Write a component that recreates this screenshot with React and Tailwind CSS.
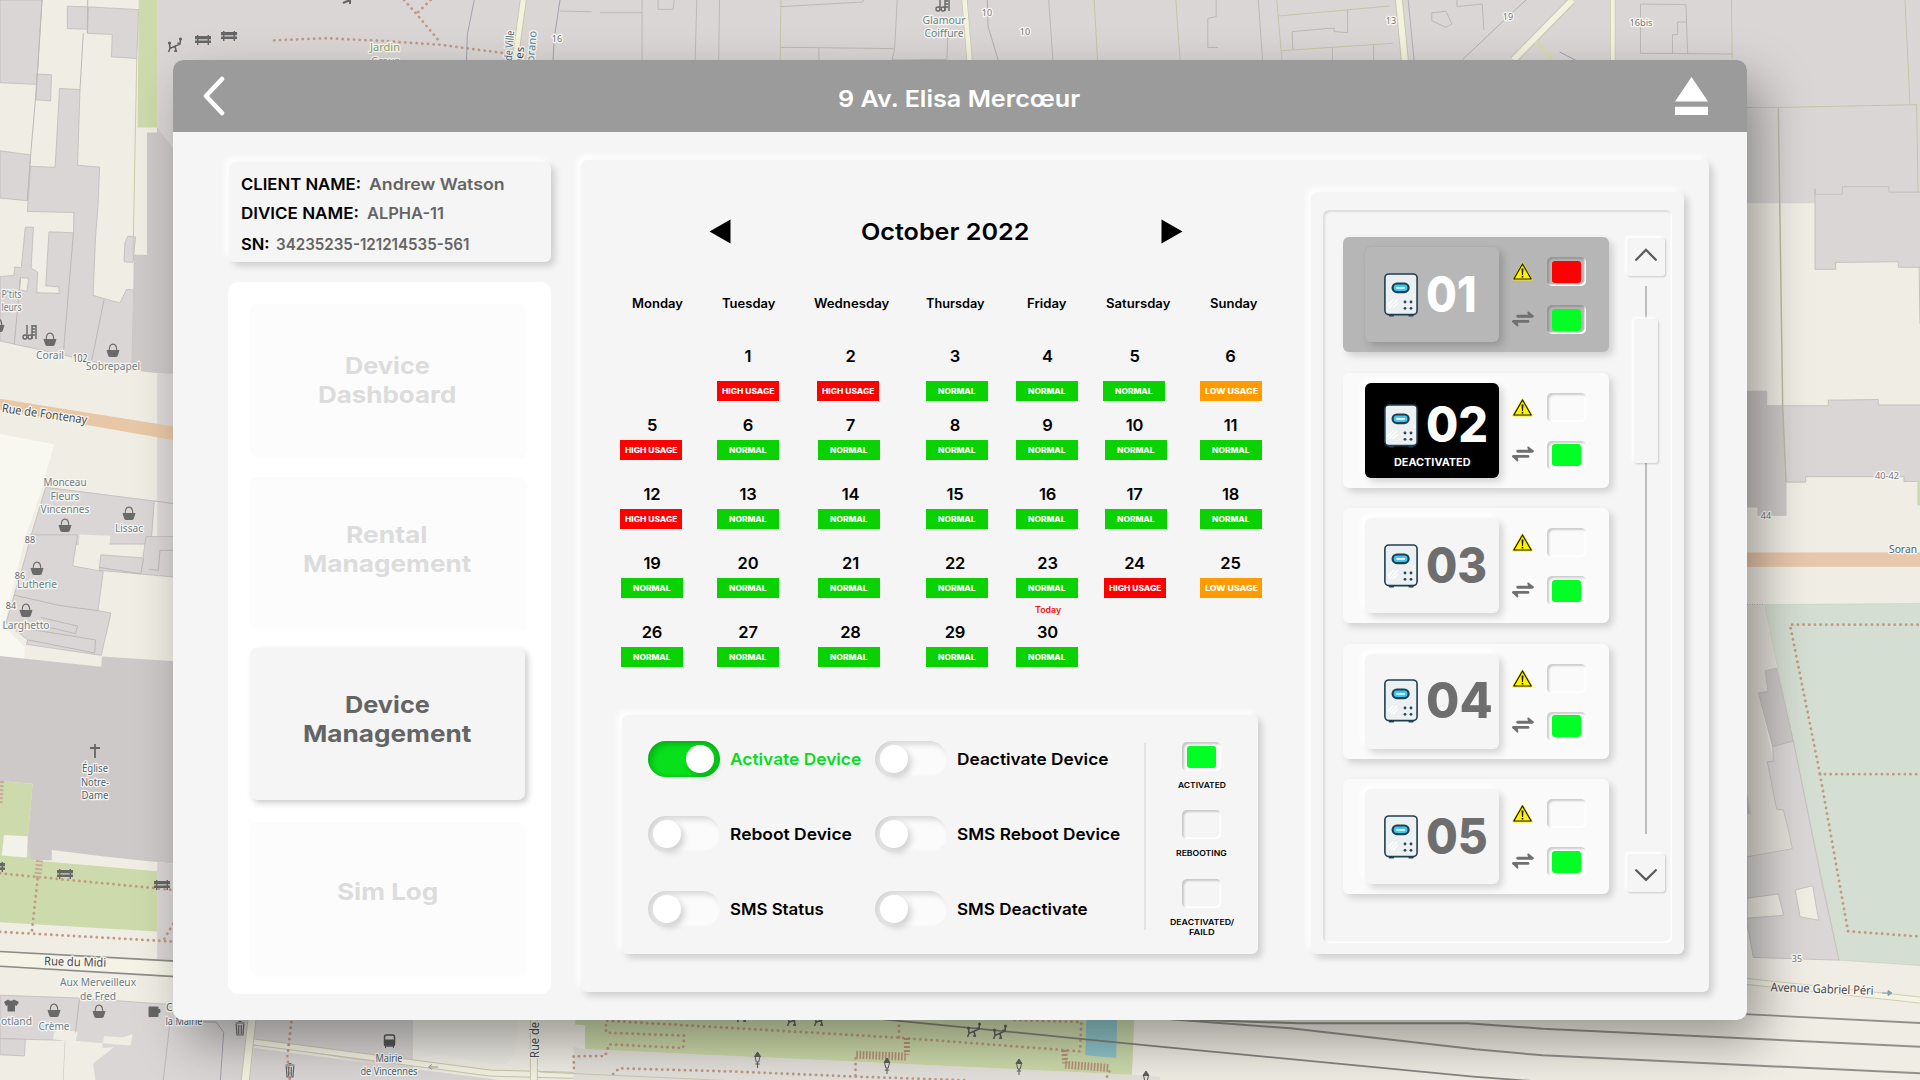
import { useLayoutEffect, useRef, useState } from "react";

/* Text on one line, widened or narrowed to an exact width. */
function Fit({ w, className = "", children }) {
  const ref = useRef(null);
  const [scale, setScale] = useState(1);
  useLayoutEffect(() => {
    const natural = ref.current.offsetWidth;
    if (natural) setScale(w / natural);
  }, [w]);
  return (
    <span className={"inline-block whitespace-nowrap text-left " + className} style={{ width: w }}>
      <span ref={ref} className="inline-block origin-left" style={{ transform: `scaleX(${scale})` }}>
        {children}
      </span>
    </span>
  );
}

/* ---------- map ---------- */

const B = "#dad6d6";
const D = "#cec9c9";
const C = "#efede4";
const G = "#cddaab";

function Poly({ p, f = B, s = "#bfbab8" }) {
  return <polygon points={p} fill={f} stroke={s} strokeWidth="0.8" vectorEffect="non-scaling-stroke" />;
}
function Line({ p, s = "#bdb8b6", w = 1, dash, cap }) {
  return (
    <polyline points={p} fill="none" stroke={s} strokeWidth={w} strokeDasharray={dash} strokeLinecap={cap} vectorEffect="non-scaling-stroke" />
  );
}
function Dots({ p, w = 2.8, s = "#c09a82" }) {
  return <Line p={p} s={s} w={w} dash="0.1 5.6" cap="round" />;
}
function Label({ x, y, w, size = 11, fill = "#6d7f86", rotate = 0, children }) {
  return (
    <text x={x} y={y} textAnchor="middle" fontSize={size} fill={fill} stroke="#f7f6f2" strokeWidth="2.6" strokeLinejoin="round"
      paintOrder="stroke" textLength={w} lengthAdjust="spacingAndGlyphs" transform={`rotate(${rotate} ${x} ${y})`}>
      {children}
    </text>
  );
}
function Basket({ x, y }) {
  return (
    <g transform={`translate(${x} ${y})`} fill="#6a6a68">
      <path d="M-3.8 0.5C-3.8-8 3.8-8 3.8 0.5" fill="none" stroke="#6a6a68" strokeWidth="1.1" />
      <path d="M-6.5 0H6.5L5 5Q4.5 7 3 7H-3Q-4.5 7-5 5Z" />
    </g>
  );
}
function Bench({ x, y }) {
  return (
    <g transform={`translate(${x} ${y})`} fill="#666">
      <path d="M-8-4H8V-0.8H-8ZM-8 0.5H8V3H-8ZM-6-5H-4.6V5H-6ZM4.6-5H6V5H4.6Z" />
    </g>
  );
}
function Seesaw({ x, y }) {
  return (
    <g transform={`translate(${x} ${y})`} fill="none" stroke="#606060" strokeWidth="1.5">
      <path d="M-5.500-3L-5 2.500L5-2L5.500-7M-5 2.500L-6.500 6M0 0.500L1.500 6M1.500 5H-1M5-2L2.500-3" />
      <circle cx="-5.500" cy="-3" r="0.800" />
      <circle cx="5.500" cy="-7" r="0.800" />
    </g>
  );
}
function Trash({ x, y }) {
  return (
    <g transform={`translate(${x} ${y})`} fill="none" stroke="#666" strokeWidth="1.2">
      <path d="M-4.500-5H4.500M-1.500-6.500H1.500M-3.800-4L-3 7H3L3.800-4M-1.300-3V6M1.300-3V6" />
    </g>
  );
}
function Lamp({ x, y }) {
  return (
    <g transform={`translate(${x} ${y})`} stroke="#5d5d5d" strokeWidth="1">
      <path d="M0-8L3-3.500H-3Z" fill="#5d5d5d" />
      <path d="M-2.500-3.500L-1.200 2H1.200L2.500-3.500M0 2V8M-2.200 4H2.200" fill="none" />
    </g>
  );
}
function Scissors({ x, y }) {
  return (
    <g transform={`translate(${x} ${y})`} fill="none" stroke="#666" strokeWidth="1.4">
      <path d="M-3-7V4M2-7V7M6-7V7M2-6H6M2-3H5M2 0H5M2 3H5" />
      <circle cx="-5" cy="5" r="2" />
      <circle cx="0" cy="5" r="2" />
    </g>
  );
}

function MapBackdrop() {
  return (
    <svg className="absolute inset-0 h-[1080px] w-[1920px] font-['Noto_Sans',sans-serif]" viewBox="0 0 1920 1080" preserveAspectRatio="none">
      <rect width="1920" height="1080" fill={C} />
      {/* north-west blocks */}
      <g transform="scale(.40816 .34436)">
        <Poly p="385,-5 1600,-5 1600,500 385,500" s="none" />
        <Poly p="0,0 103,0 90,245 0,240" />
        <Poly p="165,18 215,20 214,85 165,83" />
        <Poly p="217,20 340,28 335,170 273,165 275,100 214,97" />
        <Poly p="340,-5 385,-5 385,370 337,370" f={G} s="none" />
        <Poly p="90,215 126,217 124,293 88,290" />
        <Poly p="0,438 75,450 67,583 0,575" />
        <Poly p="146,257 196,260 190,480 244,485 240,600 234,690 228,858 294,880 310,840 328,842 323,1075 0,990 0,803 34,800 36,775 52,778 62,660 82,660 76,778 92,790 90,850 145,852 144,833 112,830 120,673 180,676 181,617 67,614 75,483 135,486" />
        <Poly p="50,806 70,808 66,846 48,842" f={C} />
        <Poly p="313,686 332,688 326,762 304,760 306,705" />
        <Poly p="360,385 385,385 385,370 430,440 430,1090 323,1075 328,740 360,740" f={D} s="none" />
        <Line p="103,0 90,245 75,450 67,583" />
        <Line p="215,0 214,97" />
        <Line p="204,97 196,260" />
        <Line p="335,170 326,740" s="#cfcba9" />
        <Line p="180,676 155,1030" />
        <Line p="255,870 225,1045" />
        <Line p="50,806 35,1000" />
        <rect x="385" y="1085" width="45" height="500" fill="#dedad9" />
        <polygon points="0,1158 430,1239 430,1279 0,1190" fill="#e8c7a6" />
        <polygon points="0,1260 133,1290 100,1430 60,1568 0,1568" fill="#f8f7f0" />
        <Poly p="112,1415 378,1455 370,1580 70,1580" />
        <Line p="378,1455 424,1462" />
        <polygon points="195,1552 270,1556 268,1590 192,1590" fill={C} />
        <Dots p="672,117 800,111 940,119 1080,130 1240,155" />
        <Dots p="990,0 1020,40 1080,125" />
        <Dots p="1055,0 1020,40" />
        <Line p="1162,0 1145,100 1143,174" s="#a3a0b0" />
        <Line p="1372,0 1358,110 1355,174" s="#a3a0b0" />
        <Line p="1282,0 1262,174" s="#cbc8a8" w={7} />
        <Line p="1282,0 1262,174" s="#f3f2e0" w={5} />
        <Line p="1372,32 1568,38" />
        <Line p="1458,0 1458,174" />
      </g>
      {/* south-west blocks */}
      <g transform="translate(0 540) scale(.40816 .34436)">
        <Poly p="75,-15 190,-15 178,75 253,92 240,205 272,212 248,335 65,303 68,290 15,240 65,38" />
        <Poly p="247,43 350,52 358,-10 430,-10 430,108 243,88" />
        <Line p="245,80 345,98 352,52" />
        <Line p="430,30 392,30 388,88 365,85" />
        <Line p="35,160 145,190 240,205" />
        <Line p="100,225 190,250 185,272 100,248" />
        <Line p="68,290 232,328 234,290 68,258" />
        <polygon points="0,0 60,0 10,250 60,310 60,345 0,340" fill="#f8f7f0" />
        <polygon points="0,337 248,368 250,338 430,352 430,940 358,932 245,918 127,900 127,930 75,930 66,890 80,708 0,700" fill={D} />
        <polygon points="0,700 80,708 66,890 75,930 385,962 385,1137 0,1110" fill={G} />
        <polygon points="10,857 68,860 66,922 4,916" fill="#f2f1ea" />
        <polygon points="385,935 430,940 430,1225 385,1218" fill="#dad6d6" />
        <Dots p="0,968 424,1016" />
        <Dots p="92,985 78,1138" />
        <Dots p="0,1138 424,1166" />
        <Dots p="424,1115 400,1164" />
        <Line p="97,930 92,985" s="#c9a99a" w={7} dash="2 2" />
        <Line p="4,700 0,765" s="#c9a99a" w={5} dash="2 2" />
        <polygon points="0,1195 430,1223 430,1268 0,1238" fill="#f4f3e6" />
        <Line p="0,1195 430,1223" s="#8d8a86" w={1.6} />
        <Line p="0,1238 430,1268" s="#8d8a86" w={1.6} />
        <Poly p="0,1322 190,1330 430,1350 430,1385 620,1385 600,1580 155,1580 160,1453 62,1450 0,1448" />
        <Poly p="135,1420 190,1428 186,1455 320,1468 325,1435 300,1445 255,1440 250,1475 280,1472 228,1520 235,1580 155,1580 160,1455 130,1450" f={C} s="none" />
        <Poly p="0,1495 60,1498 62,1450 0,1448" f={B} />
        <Line p="195,1330 185,1430" />
        <Line p="418,1385 400,1568" />
        <Line p="460,1398 530,1400 548,1430 540,1568" s="#a3a0b0" />
        <polygon points="1012,1385 1270,1385 1262,1490 1240,1522 1200,1522 1012,1480" fill="#eceae3" />
        <polygon points="625,1385 1012,1385 1012,1540 622,1460" fill={B} />
        <polygon points="622,1475 1300,1580 610,1580" fill={B} />
        <Line p="618,1385 600,1580" s="#c9c6a8" w={9} />
        <Line p="618,1385 600,1580" s="#f3f2e4" w={7} />
        <Line p="622,1458 1200,1548 1568,1560" s="#c9c6a8" w={7} />
        <Line p="622,1458 1200,1548 1568,1560" s="#f3f2e4" w={5} />
        <Line p="1308,1385 1308,1568" s="#c9c6a8" w={8} />
        <Line p="1308,1385 1308,1568" s="#f3f2e4" w={6} />
        <Dots p="714,1400 704,1500 710,1568" />
      </g>
      {/* railway */}
      <g transform="translate(600 960) scale(.84184 .33333)">
        <Line p="670,176 820,205 1040,268 1120,286 1568,340" s="#93908c" w={2} />
        <Line p="690,178 830,190 1030,190 1120,206 1568,260" s="#93908c" w={2} />
        <Line p="1300,155 1568,189" s="#93908c" w={1.8} />
      </g>
      {/* southern park */}
      <g transform="translate(540 1010) scale(.39541 .33333)">
        <polygon points="85,110 115,118 1500,194 1568,200 1568,215 85,215" fill="#e4e1dc" />
        <polygon points="89,20 1503,20 1497,194 114,117 114,46 89,44" fill={G} />
        <polygon points="1382,20 1460,20 1457,144 1379,136" fill="#8fc6ca" />
        <Dots p="1200,30 1369,36 1366,124 1325,120 920,84 167,32 167,68 365,77 362,114 175,103 165,138 85,139 86,190" />
        <Dots p="908,30 908,82" />
        <Dots p="185,192 200,175 500,185 800,200 1080,211" />
        <Dots p="798,145 798,210" />
        <Dots p="1440,184 1430,211" />
        <Line p="928,84 928,134" s="#b8917a" w={6} dash="2 2" />
        <Line p="800,134 925,140" s="#b8917a" w={8} dash="1.600 1.600" />
        <Line p="1326,120 1328,160" s="#b8917a" w={6} dash="2 2" />
        <Line p="1328,164 1438,174" s="#b8917a" w={8} dash="1.600 1.600" />
        <Line p="0,186 480,212" s="#c9c6a8" w={1} />
        <Line p="850,26 1380,88 1568,110 2360,200 2680,228" s="#85847f" w={1.8} />
      </g>
      {/* northern streets */}
      <g transform="translate(600 0) scale(.84184 .33333)">
        <rect x="-10" y="-5" width="1600" height="300" fill={B} />
        <Line p="0,38 50,38" />
        <Line p="50,0 50,180" />
        <Line p="115,0 113,180" />
        <Line p="142,0 141,180" />
        <Line p="69,0 69,28 87,28 88,0" />
        <Line p="215,0 214,180" s="#c6c3a4" />
        <Line p="215,20 312,6 313,0" />
        <Line p="215,142 260,143 350,146 353,0" />
        <Line p="260,143 260,180" />
        <Line p="350,146 347,180 412,178 413,110" />
        <Line p="460,0 461,80 473,180" s="#b0adb5" />
        <Line p="533,0 538,180" />
        <Line p="587,0 591,180" s="#c6c3a4" />
        <Line p="684,0 689,180" s="#c6c3a4" />
        <Line p="732,0 732,50 722,55 722,142 734,143" />
        <Line p="782,0 787,180" />
        <Line p="804,0 810,180" s="#c6c3a4" />
        <Line p="806,48 886,30 938,18" s="#c6c3a4" />
        <Line p="810,152 942,130" s="#c6c3a4" />
        <Line p="888,28 888,98 872,95 872,84 822,95 823,148" />
        <Line p="870,142 870,180" />
        <Line p="919,134 919,180" />
        <Line p="960,0 967,180" s="#b0adb5" />
        <Line p="988,38 1005,34 1012,72 1005,82 988,62 988,38" />
        <Line p="1018,0 1018,20 1048,12 1050,90" />
        <Line p="1100,0 1070,70 1025,178" s="#b0adb5" />
        <Line p="433,0 439,180" s="#c9c6a8" w={6} />
        <Line p="433,0 439,180" s="#f3f2e0" w={4.500} />
        <Line p="949,0 956,180" s="#c9c6a8" w={8} />
        <Line p="949,0 956,180" s="#f3f2e0" w={6} />
        <Line p="1155,0 1085,180" s="#c9c6a8" w={8} />
        <Line p="1155,0 1085,180" s="#f3f2e0" w={6} />
        <Line p="1112,125 1132,180" s="#dcd9b8" w={4} />
        <Line p="1203,0 1203,180" s="#c9c6a8" w={5.500} />
        <Line p="1203,0 1203,180" s="#f3f2e0" w={4} />
        <Line p="1140,156 1160,182" s="#a3a0b0" />
        <Line p="1236,12 1290,14 1292,162" />
        <Line p="1236,12 1236,160 1345,162" />
        <Line p="1274,162 1274,104 1280,104 1280,66 1290,66" />
        <Line p="1344,0 1345,180" s="#c6c3a4" />
      </g>
      {/* eastern blocks */}
      <g transform="translate(1640 0) scale(.33333 .68878)">
        <rect x="100" y="85" width="760" height="210" fill={B} />
        <Line p="795,0 810,152" s="#c6c3a4" />
        <polygon points="321,296 523,296 523,390 586,390 586,380 775,380 775,388 840,388 840,588 321,588" fill={C} />
        <Line p="320,156 415,156 830,152 840,470" s="#c6c3a4" />
        <Poly p="525,274 525,391 587,391 587,381 775,380 775,388 850,388 850,279 747,279 747,271 607,271 607,282 525,282" />
        <Poly p="321,568 380,568 380,589 565,589 565,581 715,580 715,588 850,588 850,699 792,699 792,692 497,692 497,700 438,700 438,748 354,748 354,736 321,736" />
        <polygon points="321,568 380,568 380,589 428,589 438,748 354,748 354,736 321,736" fill={D} />
        <Line p="415,156 428,589 438,700" s="#bdbaa5" w={1.5} />
        <rect x="832" y="698" width="20" height="36" fill={G} />
        <rect x="300" y="802" width="560" height="21" fill="#e8c8ac" />
        <polygon points="373,878 850,876 850,1402 597,1394" fill="#d5ded2" stroke="#c3c9b4" />
        <Line p="321,878 373,878" s="#8f8d98" dash="1 1.5" />
        <Dots p="850,907 450,907 540,1124 850,1124" />
        <Dots p="540,1124 624,1352 850,1360" />
        <polygon points="321,878 373,878 410,970 375,974 384,1004 355,1006 400,1105 460,1230 321,1244" fill="#e3dfd9" />
        <Poly p="375,974 410,970 460,1076 398,1084 355,1006 384,1004" f={D} />
        <Poly p="398,1084 460,1076 548,1286 597,1394 340,1390 321,1340 321,1244 457,1232 445,1204 430,1176 410,1175 382,1106 400,1105" />
        <Poly p="321,1304 415,1298 431,1329 321,1333" f={C} />
        <Poly p="466,1292 518,1286 536,1336 480,1331" f={C} />
        <polygon points="321,1150 333,1182 321,1182" fill={D} />
      </g>
      <Line p="1742,981 1920,1000" s="#d0cdb0" w={7} />
      <Line p="1742,981 1920,1000" s="#f4f3e8" w={5} />

      <Seesaw x={175} y={46} />
      <Bench x={203} y={40} />
      <Bench x={229} y={36} />
      <path d="M343 3l7-3M350 0v4" stroke="#666" strokeWidth="2" fill="none" />
      <Scissors x={30} y={332} />
      <Scissors x={943} y={4} />
      <Basket x={-2} y={325} />
      <Basket x={50} y={339} />
      <Basket x={113} y={350} />
      <Basket x={65} y={525} />
      <Basket x={129} y={513} />
      <Basket x={37} y={568} />
      <Basket x={26} y={610} />
      <Basket x={54} y={1010} />
      <Basket x={99} y={1011} />
      <Bench x={65} y={874} />
      <Bench x={162} y={885} />
      <Bench x={-3} y={867} />
      <path d="M95 744v14M90 748h10" stroke="#666" strokeWidth="1.8" />
      <path d="M4 1002l4-2.500q3 2.500 6 0l5 2.500-2.500 4-1.500-.8v6.300H7.500v-6.300l-1.500.8z" fill="#666" />
      <path d="M149 1007h9v9.500h-9zM158 1009.500h2v3h-2" fill="#666" stroke="#666" />
      <g transform="translate(389.500 1041)">
        <rect x="-5" y="-6" width="10" height="11" rx="2" fill="none" stroke="#555" strokeWidth="1.5" />
        <path d="M-5-1H5V4H-5ZM-4 5V7M4 5V7" fill="#555" stroke="#555" />
      </g>
      <path d="M429 1067h9M432 1064.500l-3.500 2.500 3.500 2.500" stroke="#999" fill="none" />
      <Trash x={240} y={1028} />
      <Trash x={290} y={1070} />
      <Lamp x={757.500} y={1060} />
      <Lamp x={887} y={1066} />
      <Lamp x={1019} y={1067} />
      <Lamp x={1146} y={1079} />
      <Seesaw x={744} y={1016} />
      <Seesaw x={794} y={1020} />
      <Seesaw x={821} y={1020} />
      <Seesaw x={974} y={1031} />
      <Seesaw x={1000} y={1033} />

      <Label x={11.500} y={298} w={20}>P'tits</Label>
      <Label x={11.500} y={311} w={20}>leurs</Label>
      <Label x={50} y={359} w={28}>Corail</Label>
      <Label x={80} y={361.500} w={15} size={10} fill="#666">102</Label>
      <Label x={113} y={370} w={54}>Sobrepapel</Label>
      <Label x={44} y={418} w={86} size={12} fill="#4a4a4a" rotate={8}>Rue de Fontenay</Label>
      <Label x={65} y={486} w={43}>Monceau</Label>
      <Label x={65} y={499.500} w={29}>Fleurs</Label>
      <Label x={65} y={513} w={49}>Vincennes</Label>
      <Label x={129} y={532} w={28}>Lissac</Label>
      <Label x={30} y={543} size={9} fill="#666">88</Label>
      <Label x={20} y={579} size={9} fill="#666">86</Label>
      <Label x={37} y={588} w={40}>Lutherie</Label>
      <Label x={11} y={609} size={9} fill="#666">84</Label>
      <Label x={26} y={629} w={47}>Larghetto</Label>
      <Label x={95} y={772} w={26} fill="#4c6470">Église</Label>
      <Label x={95} y={785.500} w={28} fill="#4c6470">Notre-</Label>
      <Label x={95} y={799} w={27} fill="#4c6470">Dame</Label>
      <Label x={75} y={966} w={62} size={12} fill="#4a4a4a" rotate={1.500}>Rue du Midi</Label>
      <Label x={98} y={986} w={76}>Aux Merveilleux</Label>
      <Label x={98} y={1000} w={36}>de Fred</Label>
      <Label x={16.500} y={1025} w={31}>otland</Label>
      <Label x={54} y={1030} w={31}>Crème</Label>
      <Label x={177} y={1011} w={22} fill="#4c6470">Café</Label>
      <Label x={184} y={1024.500} w={37} fill="#4c6470">la Mairie</Label>
      <Label x={389} y={1062} w={27} fill="#4c6470">Mairie</Label>
      <Label x={389} y={1075} w={57} fill="#4c6470">de Vincennes</Label>
      <Label x={539} y={1040} w={36} size={12} fill="#4a4a4a" rotate={-90}>Rue de</Label>
      <Label x={385} y={51} w={30} fill="#87a56b">Jardin</Label>
      <Label x={385} y={65} w={28} fill="#87a56b">Cœur</Label>
      <Label x={513} y={46} w={30} fill="#4c6470" rotate={-85}>de Ville</Label>
      <Label x={523} y={60} w={26} fill="#4a4a4a" rotate={-85}>Rues</Label>
      <Label x={535} y={50} w={38} fill="#5b8295" rotate={-85}>Sorano</Label>
      <Label x={557} y={42} size={9} fill="#777">16</Label>
      <Label x={944} y={23.500} w={43}>Glamour</Label>
      <Label x={944} y={37} w={39}>Coiffure</Label>
      <Label x={987} y={16} size={9} fill="#777">10</Label>
      <Label x={1025} y={34.500} size={9} fill="#777">10</Label>
      <Label x={1391} y={24} size={9} fill="#777">13</Label>
      <Label x={1508} y={20} size={9} fill="#777">19</Label>
      <Label x={1641} y={26} w={23} size={9} fill="#777">16bis</Label>
      <Label x={1766} y={519} size={9} fill="#777">44</Label>
      <Label x={1887} y={479} w={24} size={9} fill="#777">40-42</Label>
      <Label x={1903} y={553} w={28} fill="#4c6470">Soran</Label>
      <Label x={1797} y={962} size={9} fill="#777">35</Label>
      <Label x={1822} y={993} w={103} size={12} fill="#4a4a4a" rotate={2}>Avenue Gabriel Péri</Label>
      <path d="M1882 993h9m-3-2.500l4 2.500-4 2.500z" stroke="#7fa0a8" fill="#7fa0a8" />
    </svg>
  );
}

/* ---------- shared pieces ---------- */

const RAISED = "shadow-[4px_4px_7px_rgba(0,0,0,.16),-4px_-4px_6px_#fff]";

function Led({ fill }) {
  return (
    <span className="flex h-[29px] w-[39px] items-center justify-center rounded-[5px] shadow-[inset_2px_2px_2px_rgba(0,0,0,.18),inset_-1.5px_-1.5px_1px_#fff]">
      {fill && <span className={"h-[22px] w-[29px] rounded-[3px] " + fill} />}
    </span>
  );
}

/* ---------- sidebar ---------- */

function ClientCard() {
  return (
    <div className={"ml-px flex h-[100px] w-[322px] flex-col rounded-[6px] bg-[#f5f5f5] pl-[12px] pt-[12px] text-[16px] font-semibold leading-[20px] text-[#646464] " + RAISED}>
      <div className="flex h-[29px] gap-[8px]">
        <Fit w={120} className="text-black">CLIENT NAME:</Fit>
        <Fit w={136}>Andrew Watson</Fit>
      </div>
      <div className="flex h-[31px] gap-[8px]">
        <Fit w={118} className="text-black">DIVICE NAME:</Fit>
        <Fit w={77}>ALPHA-11</Fit>
      </div>
      <div className="flex gap-[6px]">
        <Fit w={29} className="text-black">SN:</Fit>
        <Fit w={193}>34235235-121214535-561</Fit>
      </div>
    </div>
  );
}

function MenuItem({ lines, className }) {
  return (
    <div className={"flex h-[152px] w-[275px] flex-col items-center rounded-[7px] pr-px text-[23.500px] font-bold leading-[29px] " + className}>
      {lines.map(([text, w]) => (
        <Fit key={text} w={w}>{text}</Fit>
      ))}
    </div>
  );
}

const FADED = "bg-[#fcfcfc] text-[#dcdcdc] shadow-[2px_2px_4px_rgba(0,0,0,.02)]";

function Sidebar() {
  return (
    <div className="mt-[20px] flex h-[712px] w-[323px] flex-col rounded-[10px] bg-white pl-[22px] pt-[22px]">
      <MenuItem lines={[["Device", 85], ["Dashboard", 138]]} className={"pt-[47px] " + FADED} />
      <MenuItem lines={[["Rental", 82], ["Management", 168]]} className={"mt-[21px] pt-[43px] " + FADED} />
      <MenuItem
        lines={[["Device", 85], ["Management", 168]]}
        className="mt-[19px] bg-[#f5f5f5] pt-[42px] text-[#646464] shadow-[3px_3px_6px_rgba(0,0,0,.2)]"
      />
      <MenuItem lines={[["Sim Log", 101]]} className={"mt-[22px] pt-[55px] " + FADED} />
    </div>
  );
}

/* ---------- calendar ---------- */

const COLS = "grid grid-cols-[97px_101px_108px_90px_89px_95px_62px]";

const DAYS = [
  ["Monday", 51, "ml-[12px]"],
  ["Tuesday", 53, ""],
  ["Wednesday", 75, "ml-[4px]"],
  ["Thursday", 59, "-ml-[4px]"],
  ["Friday", 40, ""],
  ["Satursday", 64, "ml-[4px]"],
  ["Sunday", 48, "ml-[6px]"],
];

const BADGES = {
  N: ["NORMAL", 38, "bg-[#0ad200]"],
  H: ["HIGH USAGE", 53, "bg-[#ff0000]"],
  L: ["LOW USAGE", 53, "bg-[#ff9b00]"],
};

const WEEKS = [
  [null, [1, "H"], [2, "H", "-ml-[2px]"], [3, "N"], [4, "N"], [5, "N", "-ml-[4px]"], [6, "L"]],
  [[5, "H"], [6, "N"], [7, "N"], [8, "N"], [9, "N"], [10, "N"], [11, "N"]],
  [[12, "H"], [13, "N"], [14, "N"], [15, "N"], [16, "N"], [17, "N"], [18, "N"]],
  [[19, "N", "ml-[2px]"], [20, "N"], [21, "N"], [22, "N"], [23, "N"], [24, "H", "-ml-[2px]"], [25, "L"]],
  [[26, "N", "ml-[2px]"], [27, "N"], [28, "N"], [29, "N"], [30, "N"], null, null],
];

const NUMBER_SHIFT = ["pl-[2px]", "", "pl-[3px]", "pr-[4px]", "pl-px", "pr-[3px]", "pr-px"];

function Day({ day, first, col }) {
  if (!day) return <div />;
  const [n, kind, nudge = ""] = day;
  const [text, w, color] = BADGES[kind];
  return (
    <div className="flex w-[62px] flex-col items-center">
      <span className={"h-[17px] text-[16.500px] font-semibold leading-[17px] tracking-[-0.200px] " + NUMBER_SHIFT[col]}>{n}</span>
      <span
        className={
          "flex h-[20px] w-[62px] shrink-0 items-center justify-center text-[7.500px] font-extrabold leading-none text-white " +
          (first ? "mt-[16px] " : "mt-[6px] ") + color + " " + nudge
        }
      >
        <Fit w={w} className="pt-px">{text}</Fit>
      </span>
      {n === 23 && (
        <Fit w={26} className="ml-[2px] mt-[8px] text-[8.500px] font-semibold leading-none text-[#f01010]">Today</Fit>
      )}
    </div>
  );
}

function Calendar() {
  return (
    <div className="pt-[59px]">
      <div className="ml-[89px] flex h-[25px] w-[474px] items-center justify-between">
        <svg width="22" height="25" viewBox="0 0 22 25"><path d="M0.500 12.500L21.500 0.500V24.500Z" /></svg>
        <Fit w={168} className="-ml-[2px] mt-px text-[23.500px] font-semibold leading-none">October 2022</Fit>
        <svg width="22" height="25" viewBox="0 0 22 25"><path d="M21.500 12.500L0.500 0.500V24.500Z" /></svg>
      </div>
      <div className={"mt-[53px] h-[51px] text-[12.500px] font-semibold leading-[13px] " + COLS}>
        {DAYS.map(([name, w, shift]) => (
          <div key={name} className="flex w-[62px] justify-center">
            <Fit w={w} className={"shrink-0 " + shift}>{name}</Fit>
          </div>
        ))}
      </div>
      {WEEKS.map((week, i) => (
        <div key={i} className={"h-[69px] " + COLS}>
          {week.map((day, c) => (
            <Day key={c} day={day} col={c} first={i === 0} />
          ))}
        </div>
      ))}
    </div>
  );
}

/* ---------- controls ---------- */

function Toggle({ on, label, w }) {
  return (
    <div className="flex h-[36px] items-center gap-[10px]">
      <span
        className={
          "flex h-[36px] w-[72px] shrink-0 items-center rounded-full " +
          (on
            ? "justify-end bg-[#08e01c] pr-[6px] shadow-[inset_3px_3px_6px_rgba(0,0,0,.22),inset_-2px_0_4px_rgba(0,0,0,.12)]"
            : "bg-[#fbfbfb] pl-[5px] shadow-[inset_4px_3px_6px_rgba(0,0,0,.16)]")
        }
      >
        <span className="size-[28px] rounded-full bg-white shadow-[3px_4px_7px_rgba(0,0,0,.18)]" />
      </span>
      <Fit w={w} className={"text-[16.300px] font-semibold leading-[20px] " + (on ? "text-[#08dc1e]" : "text-black")}>{label}</Fit>
    </div>
  );
}

function Indicator({ fill, lines, className }) {
  return (
    <div className={"flex flex-col items-center text-[7.800px] font-semibold leading-[10px] " + className}>
      <Led fill={fill} />
      <div className="mt-[9px] flex flex-col items-center">
        {lines.map(([text, w]) => (
          <Fit key={text} w={w} className="h-[10px]">{text}</Fit>
        ))}
      </div>
    </div>
  );
}

function Controls() {
  return (
    <div className={"ml-[2px] mt-[22px] flex h-[239px] w-[636px] rounded-[6px] bg-[#f5f5f5] pl-[26px] " + RAISED}>
      <div className="grid w-[496px] grid-cols-[226.500px_1fr] content-start gap-y-[39px] pt-[26px]">
        <Toggle on label="Activate Device" w={131} />
        <Toggle label="Deactivate Device" w={152} />
        <Toggle label="Reboot Device" w={122} />
        <Toggle label="SMS Reboot Device" w={163} />
        <Toggle label="SMS Status" w={94} />
        <Toggle label="SMS Deactivate" w={131} />
      </div>
      <div className="mt-[28px] h-[187px] w-[2px] bg-[#e3e3e3]" />
      <div className="ml-[20px] flex w-[71px] flex-col pt-[27px]">
        <Indicator fill="bg-[#00ff24]" lines={[["ACTIVATED", 48]]} className="h-[68px]" />
        <Indicator lines={[["REBOOTING", 51]]} className="h-[69px]" />
        <Indicator lines={[["DEACTIVATED/", 64], ["FAILD", 26]]} className="" />
      </div>
    </div>
  );
}

/* ---------- device list ---------- */

function DeviceIcon() {
  return (
    <svg className="shrink-0" width="34" height="44" viewBox="0 0 34 44">
      <rect x="5" y="40" width="5" height="3.600" rx="1.200" fill="#24475a" />
      <rect x="24.500" y="40" width="5" height="3.600" rx="1.200" fill="#24475a" />
      <rect x="0.900" y="1" width="32.200" height="40.600" rx="4" fill="#ecf0f1" stroke="#1f3f50" strokeWidth="1.600" />
      <rect x="8.600" y="10.500" width="16" height="8.600" rx="4.300" fill="#3ec6f2" stroke="#1f3f50" strokeWidth="2.200" />
      <path d="M13 14.800H20.200" stroke="#fff" strokeWidth="1.800" strokeLinecap="round" />
      <path d="M4 32L9.500 26.500M5.500 34.500L13 27M9 34.500L13.500 30.500" stroke="#fff" strokeWidth="1.200" strokeLinecap="round" />
      <path d="M30 21V24M30 26V27" stroke="#fff" strokeWidth="1.200" />
      <g fill="#24475a">
        <circle cx="21" cy="29" r="1.400" />
        <circle cx="27" cy="29" r="1.400" />
        <circle cx="21" cy="35.300" r="1.400" />
        <circle cx="27" cy="35.300" r="1.400" />
      </g>
    </svg>
  );
}

function WarningIcon() {
  return (
    <svg width="21" height="19" viewBox="0 0 21 19">
      <path d="M10.500 1.200L20 17.600H1Z" fill="#fff200" stroke="#f5ea00" strokeWidth="1.600" strokeLinejoin="round" />
      <path d="M10.500 2L19.200 17H1.800Z" fill="#fff200" stroke="#1c1a00" strokeWidth="1.200" strokeLinejoin="round" />
      <path d="M9.500 6.500H11.500L11 13H10Z" fill="#1c1a00" />
      <circle cx="10.500" cy="14.700" r="0.900" fill="#1c1a00" />
    </svg>
  );
}

function SwapIcon() {
  return (
    <svg width="22" height="16" viewBox="0 0 22 16" fill="#707070" stroke="#707070" strokeLinecap="round" strokeLinejoin="round">
      <path d="M5.700 5.200H20M1.800 10.400H16" strokeWidth="2.900" fill="none" />
      <path d="M16.300 1.500L20.800 5.200H17.500ZM5.400 14.500L1 10.400H4.500Z" strokeWidth="1.900" />
    </svg>
  );
}

function DeviceCard({ id, w, tone, alert }) {
  const card = tone === "selected" ? "bg-[#b6b6b6]" : "bg-[#fafafa]";
  const tile =
    tone === "selected"
      ? "bg-[#b7b7b7] text-white shadow-[4px_4px_8px_rgba(0,0,0,.18),-1px_-1px_1px_rgba(0,0,0,.02)]"
      : tone === "off"
        ? "bg-black text-white shadow-[4px_4px_7px_rgba(0,0,0,.15),-4px_-4px_6px_#fff]"
        : "bg-[#f5f5f5] text-[#6e6e6e] shadow-[4px_4px_7px_rgba(0,0,0,.15),-4px_-4px_6px_#fff]";
  return (
    <div className={"flex h-[115px] w-[266px] rounded-[6px] pl-[22px] pt-[10px] shadow-[4px_4px_7px_rgba(0,0,0,.15)] " + card}>
      <div className={"h-[95px] w-[134px] rounded-[6px] pl-[19px] " + tile + (tone === "off" ? " pt-[21px]" : tone === "selected" ? " pt-[26px]" : " pt-[25.500px]")}>
        <div className="flex h-[44px] gap-[8px]">
          <DeviceIcon />
          <Fit w={w} className={"text-[49px] font-extrabold leading-[48px] " + (tone === "off" ? "-mt-[3px]" : "-mt-[2px]")}>{id}</Fit>
        </div>
        {tone === "off" && (
          <Fit w={76} className="-mt-[3px] ml-[10px] block h-[12px] text-[10px] font-bold leading-[22px]">DEACTIVATED</Fit>
        )}
      </div>
      <div className="flex w-[48px] flex-col pl-[13px] pt-[15px]">
        <WarningIcon />
        <div className="mt-[29.500px]"><SwapIcon /></div>
      </div>
      <div className="flex flex-col gap-[19px] pt-[10px]">
        <Led fill={alert ? "bg-[#ff0000]" : null} />
        <Led fill="bg-[#00ff24]" />
      </div>
    </div>
  );
}

function ScrollButton({ down }) {
  return (
    <div className="flex size-[38px] items-center justify-center rounded-[3px] bg-[#f5f5f5] shadow-[1px_1px_2px_rgba(0,0,0,.18),-2px_-2px_3px_#fff]">
      <svg width="22" height="13" viewBox="0 0 22 13" className={down ? "mt-[5px]" : "-mt-[5px]"}>
        <path d={down ? "M1.200 1.200L11 10.800L20.800 1.200" : "M1.200 11.800L11 1.800L20.800 11.800"} fill="none" stroke="#5c5c5c" strokeWidth="2.300" strokeLinecap="round" />
      </svg>
    </div>
  );
}

function DevicePanel() {
  return (
    <div className={"ml-[88px] mt-[32px] h-[762px] w-[373px] rounded-[6px] bg-[#f5f5f5] pl-[12px] pt-[18px] " + RAISED}>
      <div className="flex h-[733px] w-[349px] rounded-[6px] pl-[20px] pt-[27px] shadow-[inset_2px_2px_2px_rgba(0,0,0,.1),inset_-1.500px_-1.500px_1px_#fff]">
        <div className="flex flex-col gap-[20.600px]">
          <DeviceCard id="01" w={51} tone="selected" alert />
          <DeviceCard id="02" w={62} tone="off" />
          <DeviceCard id="03" w={61} />
          <DeviceCard id="04" w={67} />
          <DeviceCard id="05" w={62} />
        </div>
        <div className="ml-[18px] flex flex-col items-center pt-px">
          <ScrollButton />
          <div className="relative my-[10px] mb-[20px] flex h-[548px] w-[38px] justify-center">
            <div className="w-[1.500px] bg-[#bdbdbd]" />
            <div className="absolute left-[7px] top-[33px] h-[144px] w-[24px] rounded-[3px] bg-[#f5f5f5] shadow-[1px_1px_2px_rgba(0,0,0,.18),-2px_-2px_3px_#fff]" />
          </div>
          <ScrollButton down />
        </div>
      </div>
    </div>
  );
}

export default function App() {
  return (
    <div className="relative h-[1080px] w-[1920px] overflow-hidden pl-[173px] pt-[60px] font-['Inter',sans-serif] text-black">
      <MapBackdrop />
      <div className="relative h-[960px] w-[1574px] rounded-[10px] bg-[#f5f5f5] shadow-[14px_22px_50px_rgba(0,0,0,.36)]">
        <header className="flex h-[72px] items-center justify-between rounded-t-[10px] bg-[#9b9b9b] pl-[28.500px] pr-[39px]">
          <svg width="24" height="40" viewBox="0 0 24 40">
            <path d="M20 3L4 20L20 37" fill="none" stroke="#fff" strokeWidth="4.600" strokeLinecap="round" strokeLinejoin="round" />
          </svg>
          <Fit w={242} className="ml-[17px] mt-[6px] text-[23.500px] font-semibold leading-[28px] text-white">9 Av. Elisa Mercœur</Fit>
          <svg width="33" height="38" viewBox="0 0 33 38" fill="#fff">
            <path d="M16.500 0L33 24.500H0ZM0 29.700H33V38H0Z" />
          </svg>
        </header>
        <div className="flex pl-[55px]">
          <aside className="pt-[30px]">
            <ClientCard />
            <Sidebar />
          </aside>
          <main className={"ml-[30px] mt-[28px] flex h-[832px] w-[1128px] rounded-[6px] bg-[#f5f5f5] pl-[39px] " + RAISED}>
            <section className="w-[603px] shrink-0">
              <Calendar />
              <Controls />
            </section>
            <DevicePanel />
          </main>
        </div>
      </div>
    </div>
  );
}
